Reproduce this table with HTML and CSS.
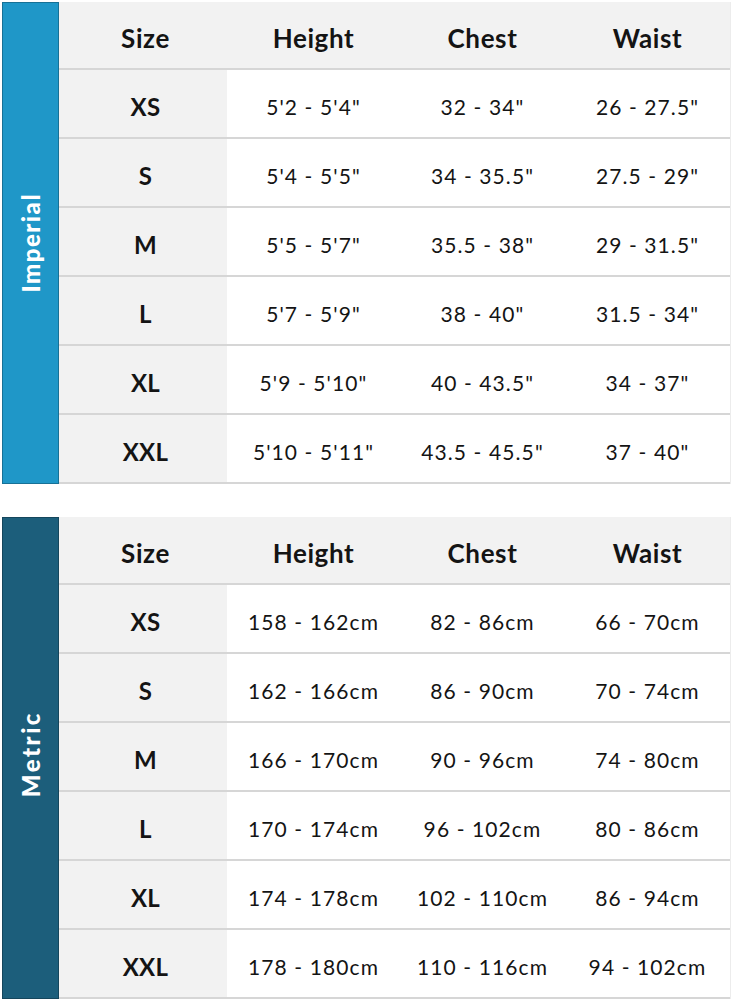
FILE: index.html
```html
<!DOCTYPE html>
<html>
<head>
<meta charset="utf-8">
<link rel="stylesheet" href="styles.css">
</head>
<body>
<div class="page">
  <section class="chart imperial">
    <div class="side"><span class="side-label">Imperial</span></div>
    <div class="table">
      <div class="row head"><div class="c size">Size</div><div class="c">Height</div><div class="c">Chest</div><div class="c">Waist</div></div>
      <div class="row"><div class="c size">XS</div><div class="c">5'2 - 5'4"</div><div class="c">32 - 34"</div><div class="c">26 - 27.5"</div></div>
      <div class="row"><div class="c size">S</div><div class="c">5'4 - 5'5"</div><div class="c">34 - 35.5"</div><div class="c">27.5 - 29"</div></div>
      <div class="row"><div class="c size">M</div><div class="c">5'5 - 5'7"</div><div class="c">35.5 - 38"</div><div class="c">29 - 31.5"</div></div>
      <div class="row"><div class="c size">L</div><div class="c">5'7 - 5'9"</div><div class="c">38 - 40"</div><div class="c">31.5 - 34"</div></div>
      <div class="row"><div class="c size">XL</div><div class="c">5'9 - 5'10"</div><div class="c">40 - 43.5"</div><div class="c">34 - 37"</div></div>
      <div class="row"><div class="c size">XXL</div><div class="c">5'10 - 5'11"</div><div class="c">43.5 - 45.5"</div><div class="c">37 - 40"</div></div>
    </div>
  </section>
  <section class="chart metric">
    <div class="side"><span class="side-label">Metric</span></div>
    <div class="table">
      <div class="row head"><div class="c size">Size</div><div class="c">Height</div><div class="c">Chest</div><div class="c">Waist</div></div>
      <div class="row"><div class="c size">XS</div><div class="c">158 - 162cm</div><div class="c">82 - 86cm</div><div class="c">66 - 70cm</div></div>
      <div class="row"><div class="c size">S</div><div class="c">162 - 166cm</div><div class="c">86 - 90cm</div><div class="c">70 - 74cm</div></div>
      <div class="row"><div class="c size">M</div><div class="c">166 - 170cm</div><div class="c">90 - 96cm</div><div class="c">74 - 80cm</div></div>
      <div class="row"><div class="c size">L</div><div class="c">170 - 174cm</div><div class="c">96 - 102cm</div><div class="c">80 - 86cm</div></div>
      <div class="row"><div class="c size">XL</div><div class="c">174 - 178cm</div><div class="c">102 - 110cm</div><div class="c">86 - 94cm</div></div>
      <div class="row"><div class="c size">XXL</div><div class="c">178 - 180cm</div><div class="c">110 - 116cm</div><div class="c">94 - 102cm</div></div>
    </div>
  </section>
</div>
</body>
</html>
```

FILE: styles.css
```css
html, body {
  margin: 0;
  padding: 0;
  background: #ffffff;
}
.page {
  padding: 2px 4px 0 2px;
  display: flex;
  flex-direction: column;
  gap: 33px;
  font-family: Lato, "Open Sans", sans-serif;
  color: #141414;
}
.chart {
  display: flex;
}
.side {
  width: 55px;
  flex: none;
  display: flex;
  align-items: center;
  justify-content: center;
  border: 1px solid rgba(0,0,0,0.25);
}
.imperial .side { background: #1f97c8; }
.metric .side { background: #1c5e7b; }
.side-label {
  writing-mode: vertical-rl;
  transform: rotate(180deg);
  color: #ffffff;
  font-weight: 900;
  font-size: 24px;
  letter-spacing: 1.5px;
}
.metric .side-label {
  letter-spacing: 2.5px;
  margin-top: -8px;
}
.table {
  flex: 1;
  display: flex;
  flex-direction: column;
  border-right: 1px solid #ececec;
}
.row {
  display: grid;
  grid-template-columns: 168px 173px 165px 1fr;
  height: 69px;
  border-bottom: 2px solid #d6d6d6;
  box-sizing: border-box;
}
.row.head {
  background: #f2f2f2;
  height: 68px;
}
.c {
  display: flex;
  align-items: center;
  justify-content: center;
  padding-top: 5px;
  font-size: 21px;
  letter-spacing: 1.1px;
}
.c.size {
  background: #f2f2f2;
  font-weight: 700;
  font-size: 24px;
  letter-spacing: 0.3px;
  padding-left: 5px;
}
.head .c {
  font-weight: 700;
  font-size: 26px;
  letter-spacing: 0.6px;
}
```
